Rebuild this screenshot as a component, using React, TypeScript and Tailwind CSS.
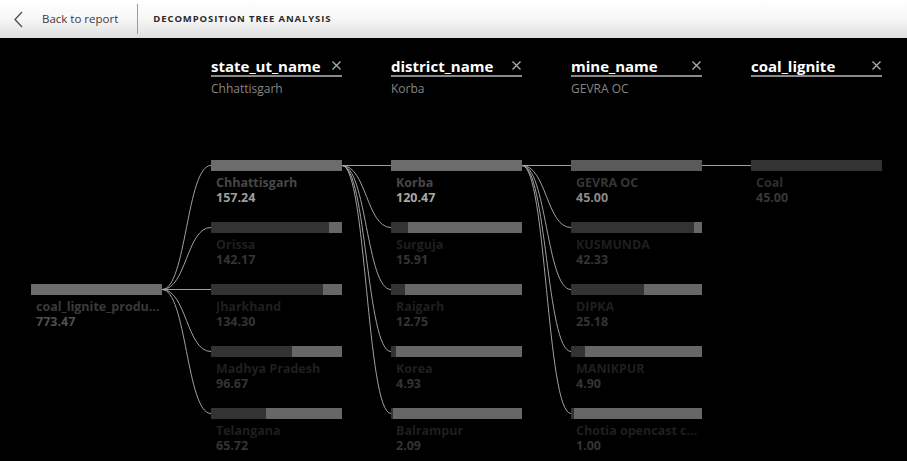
import React from 'react';

type Node = { label: string; value: number };
type Level = { field: string; picked?: string; nodes: Node[] };

const levels: Level[] = [
  {
    field: 'state_ut_name',
    picked: 'Chhattisgarh',
    nodes: [
      { label: 'Chhattisgarh', value: 157.24 },
      { label: 'Orissa', value: 142.17 },
      { label: 'Jharkhand', value: 134.3 },
      { label: 'Madhya Pradesh', value: 96.67 },
      { label: 'Telangana', value: 65.72 },
    ],
  },
  {
    field: 'district_name',
    picked: 'Korba',
    nodes: [
      { label: 'Korba', value: 120.47 },
      { label: 'Surguja', value: 15.91 },
      { label: 'Raigarh', value: 12.75 },
      { label: 'Korea', value: 4.93 },
      { label: 'Balrampur', value: 2.09 },
    ],
  },
  {
    field: 'mine_name',
    picked: 'GEVRA OC',
    nodes: [
      { label: 'GEVRA OC', value: 45 },
      { label: 'KUSMUNDA', value: 42.33 },
      { label: 'DIPKA', value: 25.18 },
      { label: 'MANIKPUR', value: 4.9 },
      { label: 'Chotia opencast c...', value: 1 },
    ],
  },
  {
    field: 'coal_lignite',
    nodes: [{ label: 'Coal', value: 45 }],
  },
];

// selected-node styling per level (bar, label, value)
const selectedStyle = [
  { bar: 'bg-[#6c6c6c]', label: 'text-[#474747]', value: 'text-[#9e9e9e]' },
  { bar: 'bg-[#6c6c6c]', label: 'text-[#474747]', value: 'text-[#a8a8a8]' },
  { bar: 'bg-[#5a5a5a]', label: 'text-[#363636]', value: 'text-[#8a8a8a]' },
  { bar: 'bg-[#333333]', label: 'text-[#2e2e2e]', value: 'text-[#383838]' },
];

const COL_W = 131;
const COL_STEP = 180;
const LEFT = 31;
const ROW_TOP = 122;
const ROW_H = 62;
const ROOT_Y = 251.5;

const rowY = (j: number) => ROW_TOP + ROW_H * j + 5.5;

function link(x0: number, y0: number, x1: number, y1: number) {
  if (Math.abs(y1 - y0) < 0.5) return `M${x0} ${y0} L${x1} ${y1}`;
  const mx = (x0 + x1) / 2;
  return `M${x0} ${y0} C${mx} ${y0} ${mx} ${y1} ${x1} ${y1}`;
}

function Connectors() {
  const paths: string[] = [];
  levels.forEach((lvl, i) => {
    // parent is the root for the first level, else the first node of the previous level
    const px = LEFT + COL_STEP * i + COL_W;
    const py = i === 0 ? ROOT_Y : rowY(0);
    const cx = LEFT + COL_STEP * (i + 1);
    lvl.nodes.forEach((_, j) => paths.push(link(px, py, cx, rowY(j))));
  });
  return (
    <svg className="absolute inset-0 pointer-events-none" width="907" height="423">
      {paths.map((d, k) => (
        <path key={k} d={d} fill="none" stroke="#a0a0a0" strokeWidth="1" />
      ))}
    </svg>
  );
}

function Bar({ node, max, selected, level }: { node: Node; max: number; selected: boolean; level: number }) {
  if (selected) return <div className={`h-[11px] w-full ${selectedStyle[level].bar}`} />;
  const pct = (node.value / max) * 100;
  return (
    <div className="h-[11px] w-full bg-[#676767] flex">
      <div className="h-full bg-[#333333]" style={{ width: `${pct}%` }} />
    </div>
  );
}

function TreeNode({ node, max, selected, level }: { node: Node; max: number; selected: boolean; level: number }) {
  const s = selected ? selectedStyle[level] : { label: 'text-[#1f1f1f]', value: 'text-[#343434]' };
  return (
    <div className="h-[62px]">
      <Bar node={node} max={max} selected={selected} level={level} />
      <div className="pl-[5px] pt-[4px] font-bold text-[12.5px] leading-[15px]">
        <div className={`truncate ${s.label}`}>{node.label}</div>
        <div className={s.value}>{node.value.toFixed(2)}</div>
      </div>
    </div>
  );
}

function Column({ lvl, level }: { lvl: Level; level: number }) {
  const max = Math.max(...lvl.nodes.map((n) => n.value));
  return (
    <div className="w-[131px] shrink-0">
      <div className="h-[122px] pt-[18px]">
        <div className="flex items-center justify-between h-[21px] border-b-2 border-[#8a8a8a]">
          <span className="text-white font-bold text-[15px] leading-[20px]">{lvl.field}</span>
          <svg width="9" height="9" viewBox="0 0 9 9" className="mr-[1px]">
            <path d="M0.5 0.5 L8.5 8.5 M8.5 0.5 L0.5 8.5" stroke="#b0b0b0" strokeWidth="1.2" />
          </svg>
        </div>
        {lvl.picked && <div className="mt-[4px] text-[12px] leading-[16px] text-[#858585]">{lvl.picked}</div>}
      </div>
      {lvl.nodes.map((n, j) => (
        <TreeNode key={n.label} node={n} max={max} selected={j === 0} level={level} />
      ))}
    </div>
  );
}

export default function App() {
  return (
    <div className="w-[907px] h-[461px] overflow-hidden bg-black [font-family:'Open_Sans','Noto_Sans',sans-serif]">
      <div className="h-[38px] flex items-center bg-gradient-to-b from-white via-[#f7f7f7] to-[#dedede]">
        <svg width="9" height="17" viewBox="0 0 9 17" className="ml-[14px]">
          <polyline points="8,1 1,8.5 8,16" fill="none" stroke="#555" strokeWidth="1.4" />
        </svg>
        <span className="ml-[19px] text-[11.5px] text-[#3a3a3a]">Back to report</span>
        <div className="ml-[19px] w-px h-[30px] bg-[#9a9a9a]" />
        <span className="ml-[15px] text-[9.5px] font-bold tracking-[0.9px] text-[#2a2a2a]">DECOMPOSITION TREE ANALYSIS</span>
      </div>
      <div className="relative h-[423px] bg-black rounded-tl-[3px]">
        <Connectors />
        <div className="relative flex gap-[49px] pl-[31px]">
          <div className="w-[131px] shrink-0 pt-[246px]">
            <div className="h-[11px] bg-[#6c6c6c]" />
            <div className="pl-[5px] pt-[4px] font-bold text-[12.5px] leading-[15px]">
              <div className="text-[#3a3a3a] truncate">coal_lignite_produ...</div>
              <div className="text-[#505050]">773.47</div>
            </div>
          </div>
          {levels.map((lvl, i) => (
            <Column key={lvl.field} lvl={lvl} level={i} />
          ))}
        </div>
      </div>
    </div>
  );
}
